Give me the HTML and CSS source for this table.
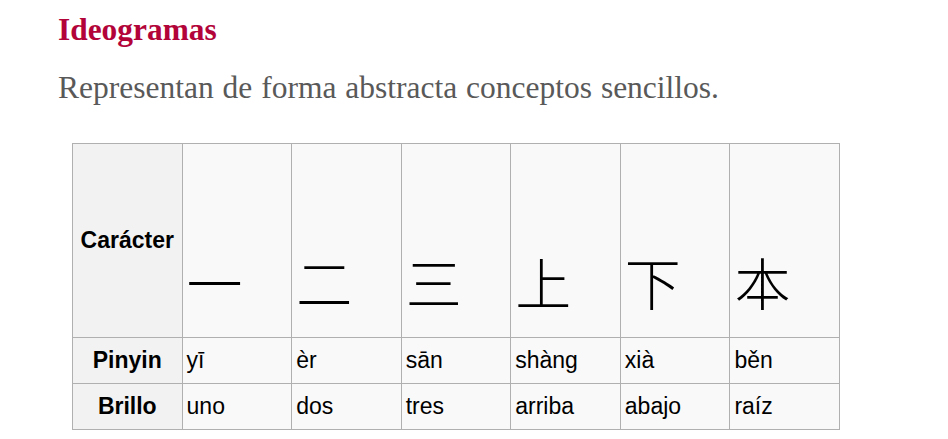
FILE: index.html
```html
<!DOCTYPE html>
<html lang="es">
<head>
<meta charset="utf-8">
<title>Ideogramas</title>
<link rel="stylesheet" href="styles.css">
</head>
<body>
<div class="page">
  <h1 class="title">Ideogramas</h1>
  <p class="lead">Representan de forma abstracta conceptos sencillos.</p>
  <table class="chars">
    <tbody>
      <tr class="row-char">
        <th class="head">Carácter</th>
        <td class="glyph" lang="zh">一</td>
        <td class="glyph" lang="zh">二</td>
        <td class="glyph" lang="zh">三</td>
        <td class="glyph" lang="zh">上</td>
        <td class="glyph" lang="zh">下</td>
        <td class="glyph" lang="zh">本</td>
      </tr>
      <tr class="row-text">
        <th class="head">Pinyin</th>
        <td>yī</td>
        <td>èr</td>
        <td>sān</td>
        <td>shàng</td>
        <td>xià</td>
        <td>běn</td>
      </tr>
      <tr class="row-text">
        <th class="head">Brillo</th>
        <td>uno</td>
        <td>dos</td>
        <td>tres</td>
        <td>arriba</td>
        <td>abajo</td>
        <td>raíz</td>
      </tr>
    </tbody>
  </table>
</div>
</body>
</html>
```

FILE: styles.css
```css
html, body {
  margin: 0;
  padding: 0;
  background: #ffffff;
}

.page {
  padding: 12px 0 0 58px;
}

.title {
  margin: 0;
  font-family: "Liberation Serif", "Times New Roman", serif;
  font-weight: bold;
  font-size: 31.4px;
  line-height: 36px;
  color: #b3043a;
}

.lead {
  margin: 22px 0 0 0;
  font-family: "Liberation Serif", "Times New Roman", serif;
  font-size: 31.5px;
  line-height: 36px;
  word-spacing: 1px;
  color: #595959;
}

.chars {
  margin: 37px 0 0 14px;
  border-collapse: collapse;
  table-layout: fixed;
  width: 768px;
  font-family: "Liberation Sans", Arial, sans-serif;
  font-size: 23px;
  color: #000;
}

.chars th,
.chars td {
  box-sizing: border-box;
  border: 1px solid #b0b0b0;
  background: #f9f9f9;
  padding: 0 4px;
  text-align: left;
  vertical-align: middle;
  overflow: hidden;
  white-space: nowrap;
}

.chars th.head {
  background: #f2f2f2;
  text-align: center;
  font-weight: bold;
}

.row-char {
  height: 194px;
}

.row-text {
  height: 46px;
}

.chars td.glyph {
  font-family: "Noto Sans CJK SC", "Noto Sans CJK JP", sans-serif;
  font-weight: 300;
  font-size: 56px;
  line-height: 56px;
  vertical-align: bottom;
  padding: 0 4px 28px 4px;
}
```
